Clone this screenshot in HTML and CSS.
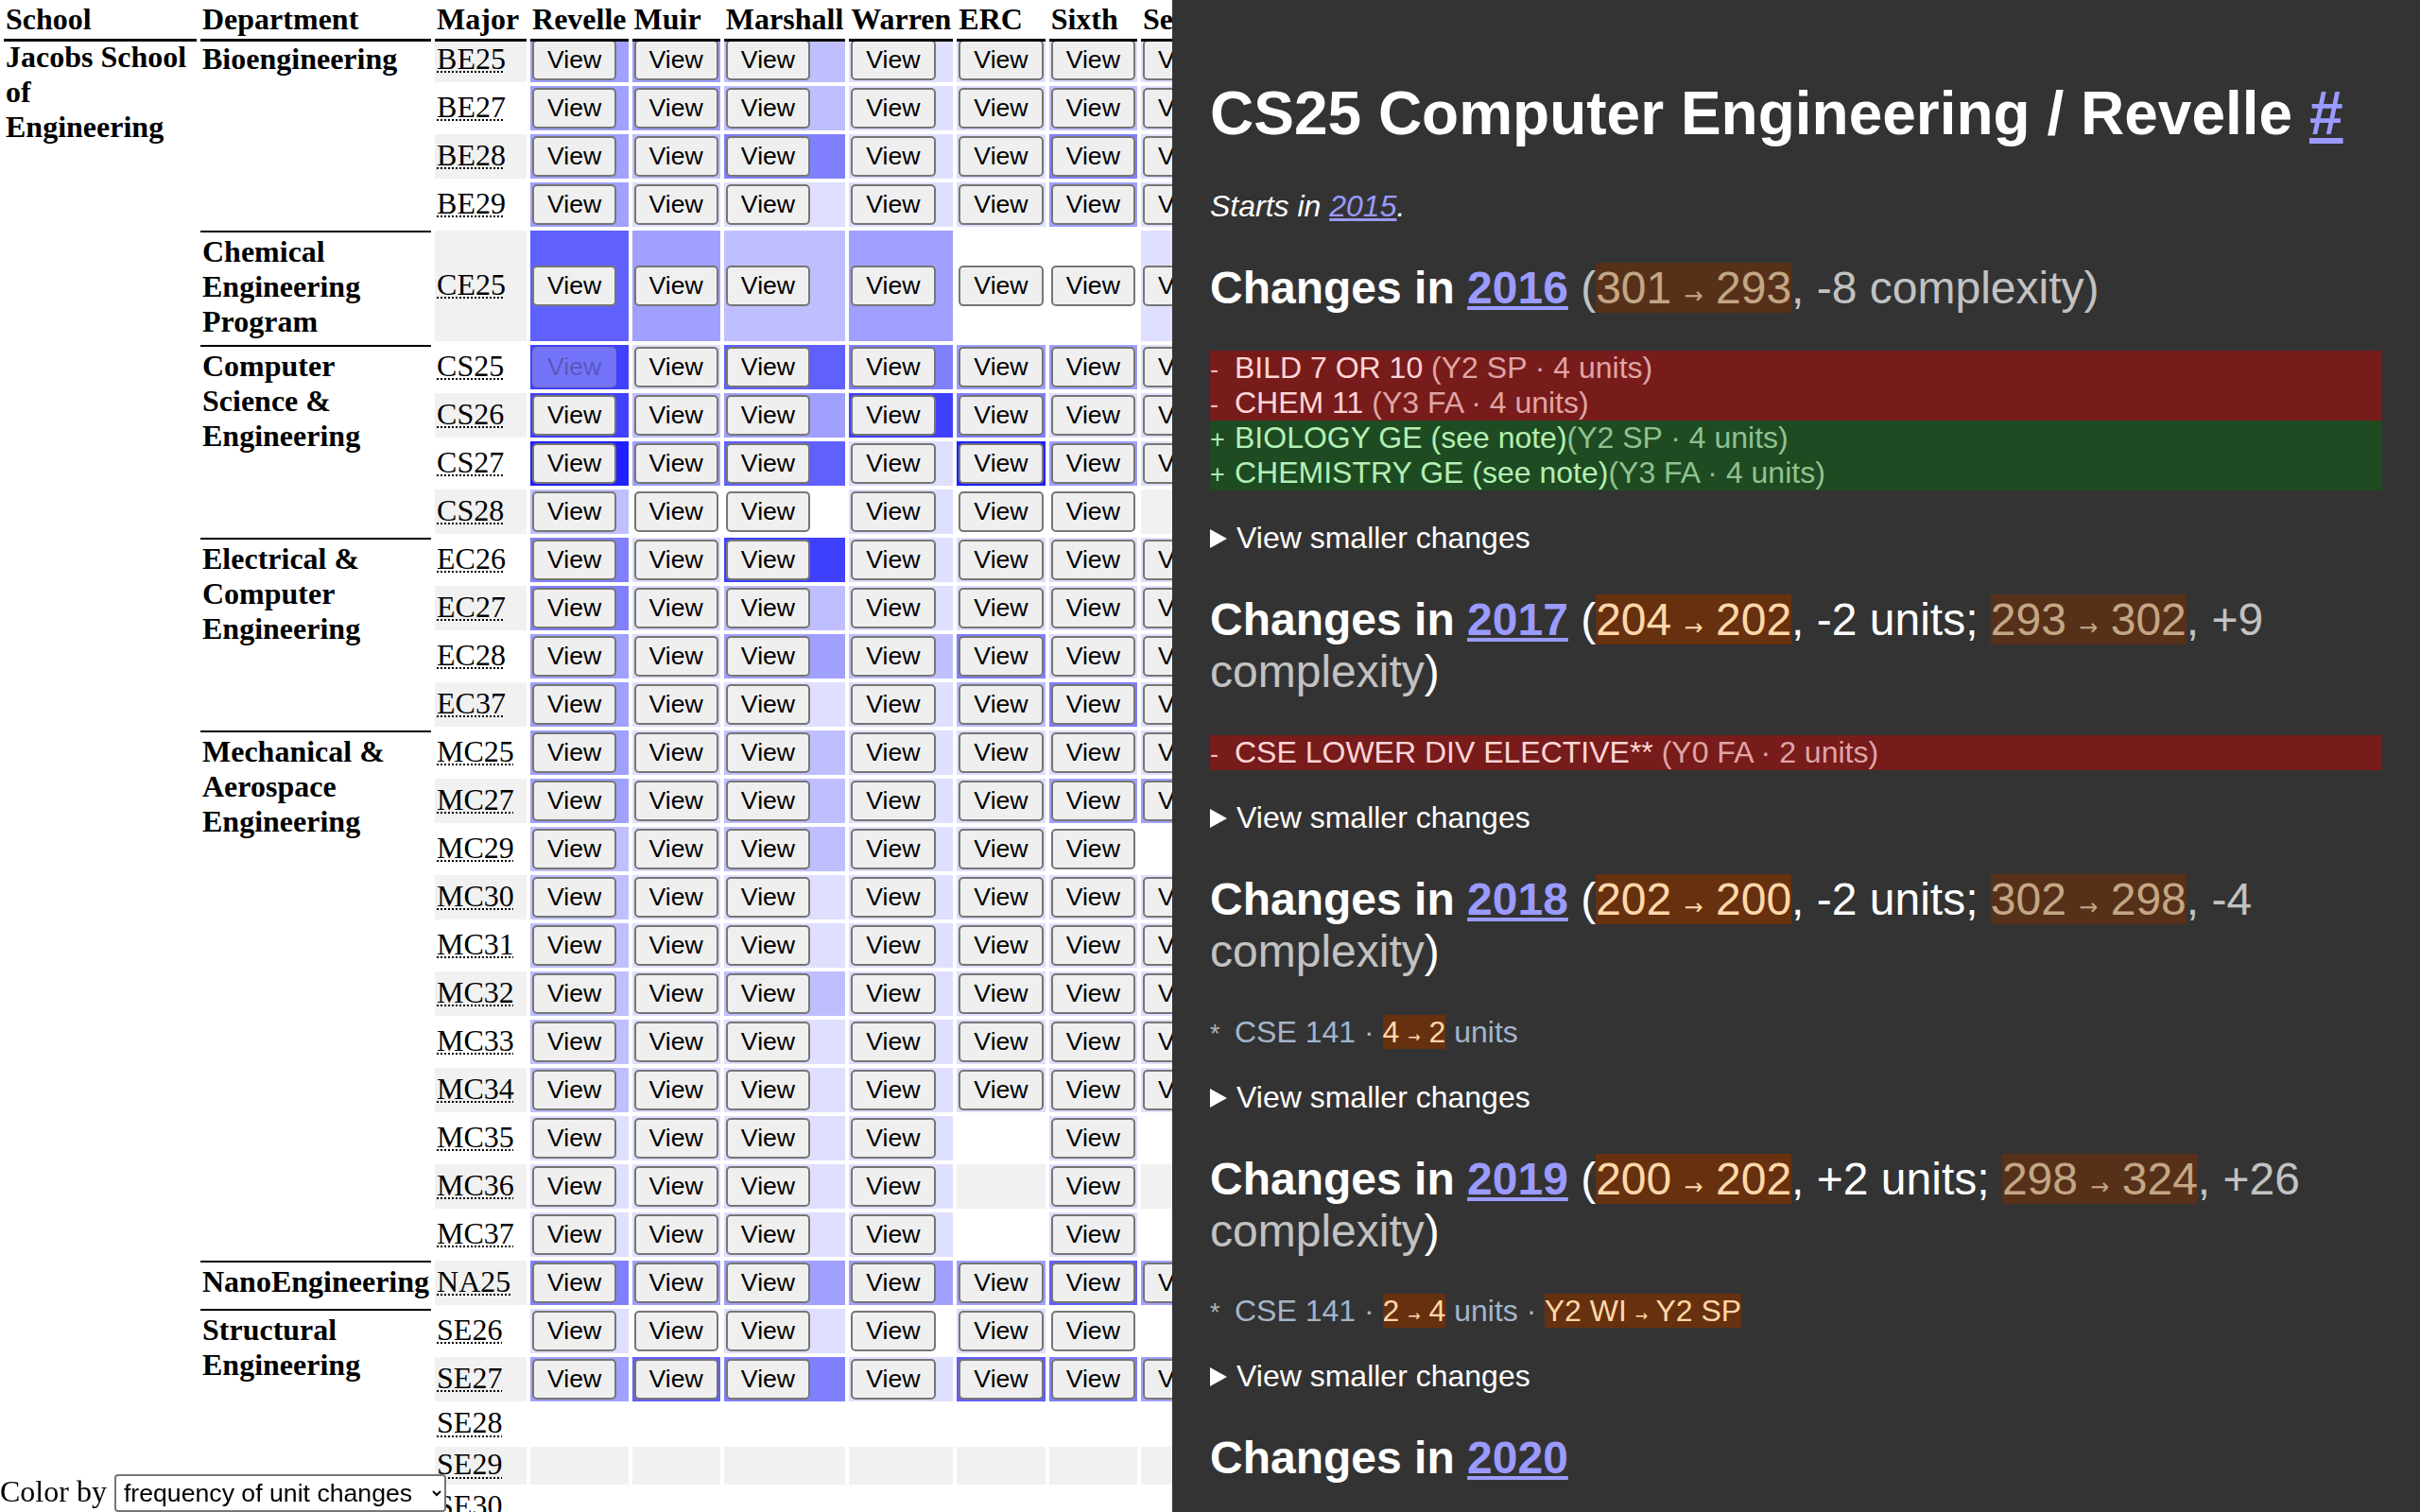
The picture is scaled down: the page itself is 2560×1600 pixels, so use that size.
FILE: index.html
```html
<!DOCTYPE html>
<html lang="en">
<head>
<meta charset="utf-8">
<title>Degree plan changes</title>
<link rel="stylesheet" href="styles.css">
</head>
<body>
<table class="grid">
  <thead>
    <tr>
      <th class="col-school">School</th>
      <th class="col-dept">Department</th>
      <th class="col-major">Major</th>
      <th>Revelle</th>
      <th>Muir</th>
      <th>Marshall</th>
      <th>Warren</th>
      <th>ERC</th>
      <th>Sixth</th>
      <th>Seventh</th>
    </tr>
  </thead>
  <tbody>
    <tr>
      <th class="school" rowspan="30">Jacobs School of Engineering</th>
      <th class="dept" rowspan="4">Bioengineering</th>
      <td class="maj"><abbr title="Bioengineering">BE25</abbr></td>
      <td class="h3"><button class="view">View</button></td><td class="h3"><button class="view">View</button></td><td class="h2"><button class="view">View</button></td><td class="h1"><button class="view">View</button></td><td class="h1"><button class="view">View</button></td><td class="h1"><button class="view">View</button></td><td class="h1"><button class="view">View</button></td>
    </tr>
    <tr>
      <td class="maj"><abbr title="Bioengineering: Biotechnology">BE27</abbr></td>
      <td class="h3"><button class="view">View</button></td><td class="h3"><button class="view">View</button></td><td class="h2"><button class="view">View</button></td><td class="h1"><button class="view">View</button></td><td class="h1"><button class="view">View</button></td><td class="h2"><button class="view">View</button></td><td class="h1"><button class="view">View</button></td>
    </tr>
    <tr>
      <td class="maj"><abbr title="Bioengineering: Bioinformatics">BE28</abbr></td>
      <td class="h3"><button class="view">View</button></td><td class="h2"><button class="view">View</button></td><td class="h4"><button class="view">View</button></td><td class="h1"><button class="view">View</button></td><td class="h1"><button class="view">View</button></td><td class="h4"><button class="view">View</button></td><td class="h1"><button class="view">View</button></td>
    </tr>
    <tr>
      <td class="maj"><abbr title="Bioengineering: BioSystems">BE29</abbr></td>
      <td class="h3"><button class="view">View</button></td><td class="h1"><button class="view">View</button></td><td class="h1"><button class="view">View</button></td><td class="h1"><button class="view">View</button></td><td class="h1"><button class="view">View</button></td><td class="h3"><button class="view">View</button></td><td class="h1"><button class="view">View</button></td>
    </tr>
    <tr>
      <th class="dept" rowspan="1">Chemical Engineering Program</th>
      <td class="maj"><abbr title="Chemical Engineering">CE25</abbr></td>
      <td class="h5"><button class="view">View</button></td><td class="h3"><button class="view">View</button></td><td class="h2"><button class="view">View</button></td><td class="h3"><button class="view">View</button></td><td class="h0"><button class="view">View</button></td><td class="h0"><button class="view">View</button></td><td class="h1"><button class="view">View</button></td>
    </tr>
    <tr>
      <th class="dept" rowspan="4">Computer Science &amp; Engineering</th>
      <td class="maj"><abbr title="Computer Engineering">CS25</abbr></td>
      <td class="h6"><button class="view" disabled>View</button></td><td class="h1"><button class="view">View</button></td><td class="h5"><button class="view">View</button></td><td class="h4"><button class="view">View</button></td><td class="h3"><button class="view">View</button></td><td class="h3"><button class="view">View</button></td><td class="h1"><button class="view">View</button></td>
    </tr>
    <tr>
      <td class="maj"><abbr title="Computer Science">CS26</abbr></td>
      <td class="h6"><button class="view">View</button></td><td class="h2"><button class="view">View</button></td><td class="h3"><button class="view">View</button></td><td class="h6"><button class="view">View</button></td><td class="h4"><button class="view">View</button></td><td class="h1"><button class="view">View</button></td><td class="h1"><button class="view">View</button></td>
    </tr>
    <tr>
      <td class="maj"><abbr title="Computer Science with a Specialization in Bioinformatics">CS27</abbr></td>
      <td class="h7"><button class="view">View</button></td><td class="h3"><button class="view">View</button></td><td class="h5"><button class="view">View</button></td><td class="h1"><button class="view">View</button></td><td class="h7"><button class="view">View</button></td><td class="h3"><button class="view">View</button></td><td class="h1"><button class="view">View</button></td>
    </tr>
    <tr>
      <td class="maj"><abbr title="Computer Science (B.A.)">CS28</abbr></td>
      <td class="h2"><button class="view">View</button></td><td class="h0"><button class="view">View</button></td><td class="h0"><button class="view">View</button></td><td class="h1"><button class="view">View</button></td><td class="h0"><button class="view">View</button></td><td class="h0"><button class="view">View</button></td><td class="e"></td>
    </tr>
    <tr>
      <th class="dept" rowspan="4">Electrical &amp; Computer Engineering</th>
      <td class="maj"><abbr title="Electrical Engineering and Society">EC26</abbr></td>
      <td class="h4"><button class="view">View</button></td><td class="h1"><button class="view">View</button></td><td class="h6"><button class="view">View</button></td><td class="h1"><button class="view">View</button></td><td class="h1"><button class="view">View</button></td><td class="h1"><button class="view">View</button></td><td class="h1"><button class="view">View</button></td>
    </tr>
    <tr>
      <td class="maj"><abbr title="Electrical Engineering">EC27</abbr></td>
      <td class="h4"><button class="view">View</button></td><td class="h1"><button class="view">View</button></td><td class="h2"><button class="view">View</button></td><td class="h1"><button class="view">View</button></td><td class="h1"><button class="view">View</button></td><td class="h1"><button class="view">View</button></td><td class="h1"><button class="view">View</button></td>
    </tr>
    <tr>
      <td class="maj"><abbr title="Engineering Physics">EC28</abbr></td>
      <td class="h3"><button class="view">View</button></td><td class="h1"><button class="view">View</button></td><td class="h3"><button class="view">View</button></td><td class="h2"><button class="view">View</button></td><td class="h4"><button class="view">View</button></td><td class="h1"><button class="view">View</button></td><td class="h1"><button class="view">View</button></td>
    </tr>
    <tr>
      <td class="maj"><abbr title="Electrical Engineering: Machine Learning and Controls">EC37</abbr></td>
      <td class="h3"><button class="view">View</button></td><td class="h1"><button class="view">View</button></td><td class="h1"><button class="view">View</button></td><td class="h1"><button class="view">View</button></td><td class="h2"><button class="view">View</button></td><td class="h4"><button class="view">View</button></td><td class="h1"><button class="view">View</button></td>
    </tr>
    <tr>
      <th class="dept" rowspan="11">Mechanical &amp; Aerospace Engineering</th>
      <td class="maj"><abbr title="Aerospace Engineering">MC25</abbr></td>
      <td class="h3"><button class="view">View</button></td><td class="h1"><button class="view">View</button></td><td class="h2"><button class="view">View</button></td><td class="h1"><button class="view">View</button></td><td class="h1"><button class="view">View</button></td><td class="h1"><button class="view">View</button></td><td class="h1"><button class="view">View</button></td>
    </tr>
    <tr>
      <td class="maj"><abbr title="Environmental Engineering">MC27</abbr></td>
      <td class="h3"><button class="view">View</button></td><td class="h1"><button class="view">View</button></td><td class="h2"><button class="view">View</button></td><td class="h1"><button class="view">View</button></td><td class="h1"><button class="view">View</button></td><td class="h3"><button class="view">View</button></td><td class="h3"><button class="view">View</button></td>
    </tr>
    <tr>
      <td class="maj"><abbr title="Mechanical Engineering">MC29</abbr></td>
      <td class="h2"><button class="view">View</button></td><td class="h1"><button class="view">View</button></td><td class="h2"><button class="view">View</button></td><td class="h1"><button class="view">View</button></td><td class="h1"><button class="view">View</button></td><td class="h0"><button class="view">View</button></td><td class="e"></td>
    </tr>
    <tr>
      <td class="maj"><abbr title="Mechanical Engineering: Controls and Robotics">MC30</abbr></td>
      <td class="h2"><button class="view">View</button></td><td class="h1"><button class="view">View</button></td><td class="h1"><button class="view">View</button></td><td class="h1"><button class="view">View</button></td><td class="h1"><button class="view">View</button></td><td class="h1"><button class="view">View</button></td><td class="h1"><button class="view">View</button></td>
    </tr>
    <tr>
      <td class="maj"><abbr title="Mechanical Engineering: Fluid Mechanics and Thermal Systems">MC31</abbr></td>
      <td class="h2"><button class="view">View</button></td><td class="h1"><button class="view">View</button></td><td class="h1"><button class="view">View</button></td><td class="h1"><button class="view">View</button></td><td class="h1"><button class="view">View</button></td><td class="h1"><button class="view">View</button></td><td class="h1"><button class="view">View</button></td>
    </tr>
    <tr>
      <td class="maj"><abbr title="Mechanical Engineering: Materials Science and Engineering">MC32</abbr></td>
      <td class="h2"><button class="view">View</button></td><td class="h1"><button class="view">View</button></td><td class="h2"><button class="view">View</button></td><td class="h1"><button class="view">View</button></td><td class="h1"><button class="view">View</button></td><td class="h1"><button class="view">View</button></td><td class="h1"><button class="view">View</button></td>
    </tr>
    <tr>
      <td class="maj"><abbr title="Mechanical Engineering: Mechanics of Materials">MC33</abbr></td>
      <td class="h2"><button class="view">View</button></td><td class="h1"><button class="view">View</button></td><td class="h1"><button class="view">View</button></td><td class="h1"><button class="view">View</button></td><td class="h1"><button class="view">View</button></td><td class="h1"><button class="view">View</button></td><td class="h1"><button class="view">View</button></td>
    </tr>
    <tr>
      <td class="maj"><abbr title="Mechanical Engineering: Renewable Energy and Environmental Flows">MC34</abbr></td>
      <td class="h2"><button class="view">View</button></td><td class="h1"><button class="view">View</button></td><td class="h1"><button class="view">View</button></td><td class="h1"><button class="view">View</button></td><td class="h1"><button class="view">View</button></td><td class="h1"><button class="view">View</button></td><td class="h1"><button class="view">View</button></td>
    </tr>
    <tr>
      <td class="maj"><abbr title="Mechanical Engineering">MC35</abbr></td>
      <td class="h1"><button class="view">View</button></td><td class="h1"><button class="view">View</button></td><td class="h1"><button class="view">View</button></td><td class="h1"><button class="view">View</button></td><td class="e"></td><td class="h1"><button class="view">View</button></td><td class="e"></td>
    </tr>
    <tr>
      <td class="maj"><abbr title="Mechanical Engineering">MC36</abbr></td>
      <td class="h1"><button class="view">View</button></td><td class="h1"><button class="view">View</button></td><td class="h1"><button class="view">View</button></td><td class="h1"><button class="view">View</button></td><td class="e"></td><td class="h1"><button class="view">View</button></td><td class="e"></td>
    </tr>
    <tr>
      <td class="maj"><abbr title="Mechanical Engineering">MC37</abbr></td>
      <td class="h1"><button class="view">View</button></td><td class="h1"><button class="view">View</button></td><td class="h1"><button class="view">View</button></td><td class="h1"><button class="view">View</button></td><td class="e"></td><td class="h1"><button class="view">View</button></td><td class="e"></td>
    </tr>
    <tr>
      <th class="dept" rowspan="1">NanoEngineering</th>
      <td class="maj"><abbr title="NanoEngineering">NA25</abbr></td>
      <td class="h4"><button class="view">View</button></td><td class="h3"><button class="view">View</button></td><td class="h3"><button class="view">View</button></td><td class="h3"><button class="view">View</button></td><td class="h3"><button class="view">View</button></td><td class="h5"><button class="view">View</button></td><td class="h3"><button class="view">View</button></td>
    </tr>
    <tr>
      <th class="dept" rowspan="5">Structural Engineering</th>
      <td class="maj"><abbr title="Structural Engineering">SE26</abbr></td>
      <td class="h1"><button class="view">View</button></td><td class="h0"><button class="view">View</button></td><td class="h1"><button class="view">View</button></td><td class="h0"><button class="view">View</button></td><td class="h1"><button class="view">View</button></td><td class="h0"><button class="view">View</button></td><td class="e"></td>
    </tr>
    <tr>
      <td class="maj"><abbr title="Structural Engineering">SE27</abbr></td>
      <td class="h3"><button class="view">View</button></td><td class="h5"><button class="view">View</button></td><td class="h4"><button class="view">View</button></td><td class="h1"><button class="view">View</button></td><td class="h5"><button class="view">View</button></td><td class="h4"><button class="view">View</button></td><td class="h3"><button class="view">View</button></td>
    </tr>
    <tr>
      <td class="maj"><abbr title="Structural Engineering: Aerospace Structures">SE28</abbr></td>
      <td class="e"></td><td class="e"></td><td class="e"></td><td class="e"></td><td class="e"></td><td class="e"></td><td class="e"></td>
    </tr>
    <tr>
      <td class="maj"><abbr title="Structural Engineering: Civil Structures">SE29</abbr></td>
      <td class="e"></td><td class="e"></td><td class="e"></td><td class="e"></td><td class="e"></td><td class="e"></td><td class="e"></td>
    </tr>
    <tr>
      <td class="maj"><abbr title="Structural Engineering: Geotechnical Engineering">SE30</abbr></td>
      <td class="e"></td><td class="e"></td><td class="e"></td><td class="e"></td><td class="e"></td><td class="e"></td><td class="e"></td>
    </tr>
  </tbody>
</table>

<div class="colorby">
  <label for="color-mode">Color by</label>
  <select id="color-mode">
    <option>frequency of unit changes</option>
    <option>frequency of complexity changes</option>
  </select>
</div>

<aside class="panel">
  <h1>CS25 Computer Engineering / Revelle <a href="#">#</a></h1>
  <p class="starts">Starts in <a href="#">2015</a>.</p>

  <h2>Changes in <a href="#">2016</a> <span class="paren dim">(<span class="delta">301 <span class="arr">→</span> 293</span>, -8 complexity)</span></h2>
  <ul class="changes">
    <li class="rem"><span class="sign">-</span><span class="name">BILD 7 OR 10</span> <span class="meta">(Y2 SP · 4 units)</span></li>
    <li class="rem"><span class="sign">-</span><span class="name">CHEM 11</span> <span class="meta">(Y3 FA · 4 units)</span></li>
    <li class="add"><span class="sign">+</span><span class="name">BIOLOGY GE (see note)</span><span class="meta">(Y2 SP · 4 units)</span></li>
    <li class="add"><span class="sign">+</span><span class="name">CHEMISTRY GE (see note)</span><span class="meta">(Y3 FA · 4 units)</span></li>
  </ul>
  <details><summary>View smaller changes</summary></details>

  <h2>Changes in <a href="#">2017</a> <span class="paren">(<span class="delta">204 <span class="arr">→</span> 202</span>, -2 units; <span class="dim"><span class="delta">293 <span class="arr">→</span> 302</span>, +9 complexity</span>)</span></h2>
  <ul class="changes">
    <li class="rem"><span class="sign">-</span><span class="name">CSE LOWER DIV ELECTIVE**</span> <span class="meta">(Y0 FA · 2 units)</span></li>
  </ul>
  <details><summary>View smaller changes</summary></details>

  <h2>Changes in <a href="#">2018</a> <span class="paren">(<span class="delta">202 <span class="arr">→</span> 200</span>, -2 units; <span class="dim"><span class="delta">302 <span class="arr">→</span> 298</span>, -4 complexity</span>)</span></h2>
  <ul class="changes">
    <li class="mod"><span class="sign">*</span>CSE 141 · <span class="delta">4 <span class="arr">→</span> 2</span> units</li>
  </ul>
  <details><summary>View smaller changes</summary></details>

  <h2>Changes in <a href="#">2019</a> <span class="paren">(<span class="delta">200 <span class="arr">→</span> 202</span>, +2 units; <span class="dim"><span class="delta">298 <span class="arr">→</span> 324</span>, +26 complexity</span>)</span></h2>
  <ul class="changes">
    <li class="mod"><span class="sign">*</span>CSE 141 · <span class="delta">2 <span class="arr">→</span> 4</span> units · <span class="delta">Y2 WI <span class="arr">→</span> Y2 SP</span></li>
  </ul>
  <details><summary>View smaller changes</summary></details>

  <h2>Changes in <a href="#">2020</a></h2>
</aside>
</body>
</html>
```

FILE: styles.css
```css
html,
body {
  margin: 0;
  height: 100%;
  overflow: hidden;
}

body {
  font-family: "Liberation Serif", "Times New Roman", serif;
  font-size: 32px;
  color: #000;
  background: #fff;
}

/* ---------- table ---------- */
.grid {
  border-collapse: separate;
  border-spacing: 4px;
  margin-top: -12px;
}

.grid thead th {
  position: sticky;
  top: 0;
  z-index: 2;
  background: #fff;
  text-align: left;
  padding: 2px;
  border-bottom: 3px solid #000;
  white-space: nowrap;
  font-weight: bold;
}

.grid .col-school { width: 200px; }
.grid .col-dept { width: 240px; }
.grid .col-major { width: 93px; }

.grid tbody th {
  text-align: left;
  vertical-align: top;
  padding: 2px;
  font-weight: bold;
}

.grid tbody th.dept {
  border-top: 2px solid #000;
}

.grid td {
  padding: 2px;
  vertical-align: middle;
}

.grid td.maj {
  padding: 0 2px 3px;
}

.grid abbr {
  text-decoration: underline dotted;
  text-decoration-thickness: 2px;
  text-underline-offset: 3px;
}

.grid tbody tr:nth-child(odd) > td.maj,
.grid tbody tr:nth-child(odd) > td.e {
  background: #f1f1f1;
}

.h0 { background: #ffffff; }
.h1 { background: #dfdfff; }
.h2 { background: #bfbfff; }
.h3 { background: #a0a0ff; }
.h4 { background: #8080ff; }
.h5 { background: #6060ff; }
.h6 { background: #4040ff; }
.h7 { background: #2020ff; }

.view {
  font-family: "Liberation Sans", Arial, sans-serif;
  font-size: 26.67px;
  line-height: normal;
  margin: 0;
  padding: 4px 14px;
  border: 2px solid #767676;
  border-radius: 5px;
  background: #efefef;
  color: #000;
}

.view:disabled {
  background: rgba(239, 239, 239, 0.3);
  border-color: rgba(118, 118, 118, 0.3);
  color: rgba(16, 16, 16, 0.3);
}

/* ---------- color-by control ---------- */
.colorby {
  position: fixed;
  left: 0;
  bottom: 0;
  z-index: 3;
  line-height: normal;
}

.colorby select {
  font-family: "Liberation Sans", Arial, sans-serif;
  font-size: 26.67px;
  width: 351px;
  padding: 2px 4px;
  border: 2px solid #767676;
  border-radius: 4px;
  background: #fff;
  color: #000;
}

/* ---------- side panel ---------- */
.panel {
  position: fixed;
  top: 0;
  right: 0;
  bottom: 0;
  z-index: 5;
  width: 1320px;
  box-sizing: border-box;
  padding: 40px 40px 0;
  overflow: hidden;
  background: #333;
  color: #fff;
  font-family: "Liberation Sans", Arial, sans-serif;
  font-size: 32px;
}

.panel a {
  color: #9a9aff;
}

.panel h1 {
  font-size: 64px;
  margin: 42.88px 0;
}

.panel h2 {
  font-size: 48px;
  margin: 39.84px 0;
}

.panel .starts {
  font-style: italic;
  margin: 32px 0;
}

.paren {
  font-weight: normal;
}

.dim {
  opacity: 0.7;
}

.delta {
  background: #67300f;
  color: #ffd8a8;
}

.arr {
  font-family: "DejaVu Sans", sans-serif;
  font-size: 0.5em;
}

.changes {
  list-style: none;
  margin: 32px 0;
  padding: 0;
}

.changes .sign {
  display: inline-block;
  width: 26px;
  font-size: 27px;
}

.changes .rem {
  background: #771b1b;
  color: #ffd6d6;
}

.changes .rem .sign { color: #eebcbc; }
.changes .rem .meta { color: #e0a4a4; }

.changes .add {
  background: #1e4b22;
  color: #b4f0b4;
}

.changes .add .sign { color: #b0e8b0; }
.changes .add .meta { color: #90c290; }

.changes .mod {
  color: #a4b5ca;
}

.changes .mod .sign { color: #b0b0b0; }

.panel details {
  margin: 0;
}

.panel summary {
  list-style: none;
  cursor: pointer;
}

.panel summary::-webkit-details-marker {
  display: none;
}

.panel summary::before {
  content: "";
  display: inline-block;
  width: 0;
  height: 0;
  margin: 0 10px 0 0;
  border-left: 18px solid #fff;
  border-top: 10px solid transparent;
  border-bottom: 10px solid transparent;
}
```
